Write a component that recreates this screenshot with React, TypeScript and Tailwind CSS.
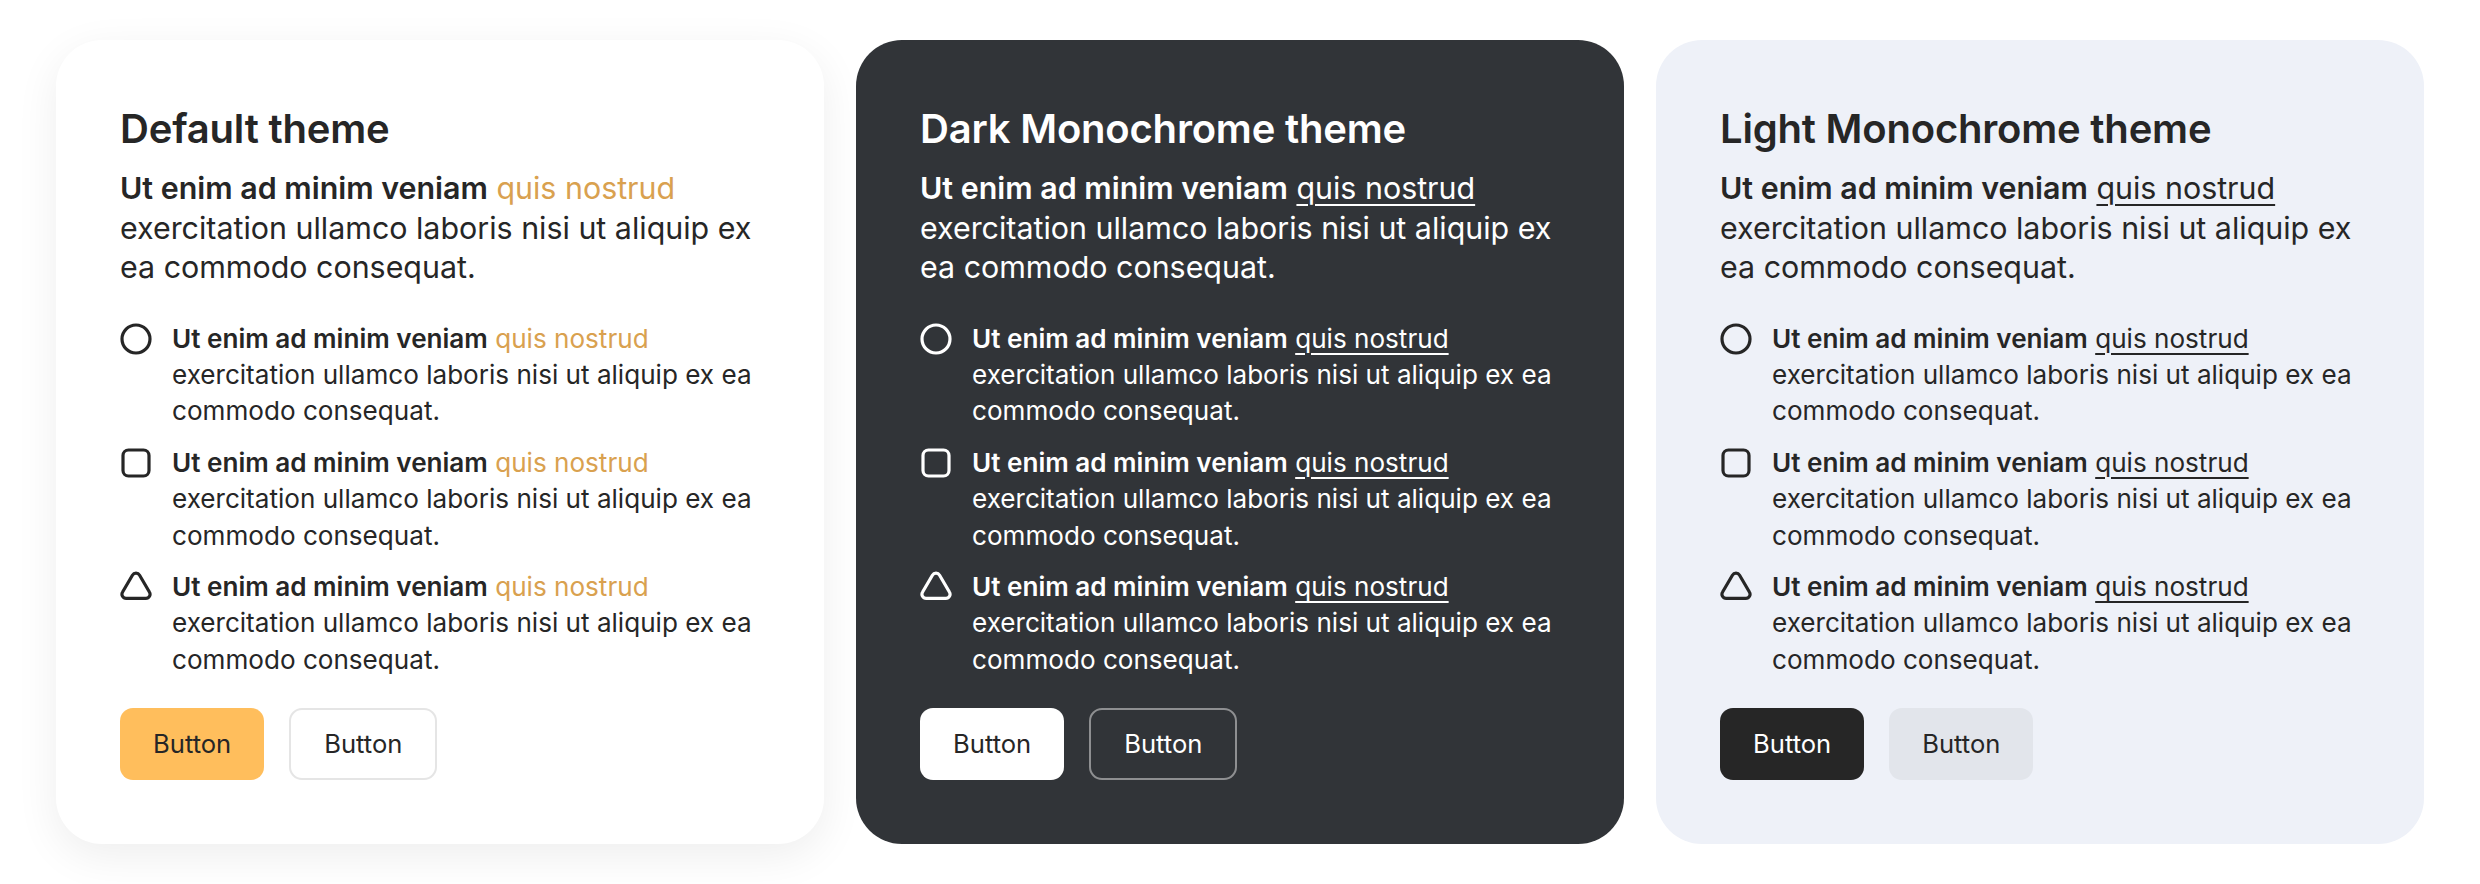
import React from "react";

type Theme = {
  title: string;
  card: string;
  text: string;
  link: string;
  primary: string;
  secondary: string;
};

const themes: Theme[] = [
  {
    title: "Default theme",
    card: "bg-white shadow-[0_12px_44px_rgba(0,0,0,0.07)]",
    text: "text-[#262626]",
    link: "text-[#d9a14f]",
    primary: "bg-[#ffbe5c] text-[#262626]",
    secondary: "bg-white text-[#262626] border-2 border-[#e5e5e5]",
  },
  {
    title: "Dark Monochrome theme",
    card: "bg-[#313438]",
    text: "text-white",
    link: "underline decoration-[1.5px] underline-offset-[5px]",
    primary: "bg-white text-[#262626]",
    secondary: "bg-transparent text-white border-2 border-[#8e8f91]",
  },
  {
    title: "Light Monochrome theme",
    card: "bg-[#eef1f8]",
    text: "text-[#262626]",
    link: "underline decoration-[1.5px] underline-offset-[5px]",
    primary: "bg-[#262626] text-white",
    secondary: "bg-[#e2e5eb] text-[#262626]",
  },
];

const CircleIcon = () => (
  <svg width="32" height="32" viewBox="0 0 32 32" fill="none" stroke="currentColor" strokeWidth="3.2">
    <circle cx="16" cy="16" r="14" />
  </svg>
);

const SquareIcon = () => (
  <svg width="32" height="32" viewBox="0 0 32 32" fill="none" stroke="currentColor" strokeWidth="3.2">
    <rect x="3" y="3" width="26" height="26" rx="5.5" />
  </svg>
);

const TriangleIcon = () => (
  <svg width="32" height="32" viewBox="0 0 32 32" fill="none" stroke="currentColor" strokeWidth="3.2" strokeLinejoin="round">
    <path d="M12.4 4.2a4.2 4.2 0 0 1 7.2 0l9.8 16.8a4.2 4.2 0 0 1-3.6 6.4H6.2a4.2 4.2 0 0 1-3.6-6.4Z" />
  </svg>
);

const icons = [CircleIcon, SquareIcon, TriangleIcon];

function Card({ theme }: { theme: Theme }) {
  return (
    <div className={`flex-1 rounded-[46px] px-16 pt-[66px] pb-16 ${theme.card} ${theme.text}`}>
      <h2 className="text-[40px] font-semibold leading-[46px] tracking-[-0.2px]">{theme.title}</h2>
      <p className="mt-[17px] text-[30.4px] leading-[39.5px]">
        <span className="font-semibold">Ut enim ad minim veniam</span>{" "}
        <span className={theme.link}>quis nostrud</span> exercitation ullamco laboris nisi ut aliquip ex
        ea commodo consequat.
      </p>
      <div className="mt-[33px] flex flex-col gap-[15px]">
        {icons.map((Icon, index) => (
          <div key={index} className="flex gap-[20px]">
            <div className="mt-[2px] shrink-0">
              <Icon />
            </div>
            <p className="text-[26.1px] leading-[36.4px]">
              <span className="font-semibold">Ut enim ad minim veniam</span>{" "}
              <span className={theme.link}>quis nostrud</span> exercitation ullamco laboris nisi ut aliquip
              ex ea commodo consequat.
            </p>
          </div>
        ))}
      </div>
      <div className="mt-[30px] flex gap-[25px]">
        <button className={`h-[72px] rounded-[13px] px-[33px] text-[25.6px] ${theme.primary}`}>Button</button>
        <button className={`h-[72px] rounded-[13px] px-[33px] text-[25.6px] ${theme.secondary}`}>Button</button>
      </div>
    </div>
  );
}

export default function App() {
  return (
    <div
      className="flex min-h-[884px] gap-8 bg-white px-14 py-10"
      style={{ fontFamily: "Inter, 'Noto Sans', sans-serif" }}
    >
      {themes.map((theme) => (
        <Card key={theme.title} theme={theme} />
      ))}
    </div>
  );
}
